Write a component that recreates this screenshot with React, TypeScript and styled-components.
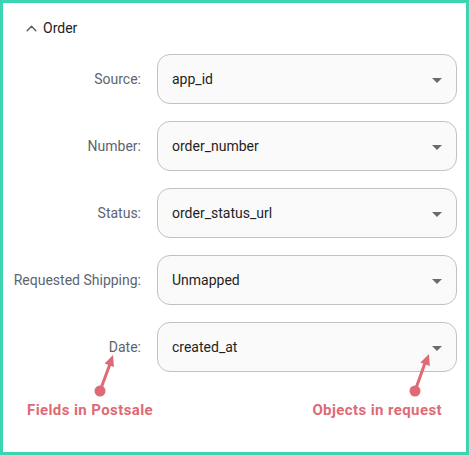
import styled, { createGlobalStyle } from 'styled-components'

const GlobalStyle = createGlobalStyle`
  html, body {
    margin: 0;
    padding: 0;
    background: #ffffff;
  }

  body {
    font-family: Roboto, 'Liberation Sans', Arial, sans-serif;
  }
`

const Frame = styled.div`
  position: relative;
  box-sizing: border-box;
  width: 469px;
  height: 455px;
  border: 3px solid #3dd5b1;
  background: #ffffff;
  padding-top: 15px;
`

const Header = styled.div`
  display: flex;
  align-items: center;
  gap: 5px;
  padding-left: 22px;
  height: 20px;
  font-size: 14px;
  color: #222222;
`

const Chevron = styled.svg`
  width: 13px;
  height: 13px;
  color: #5a5a5a;
`

const Rows = styled.div`
  display: grid;
  grid-template-columns: 138px 300px;
  column-gap: 16px;
  row-gap: 17px;
  margin-top: 16px;
`

const Label = styled.div`
  display: flex;
  align-items: center;
  justify-content: flex-end;
  font-size: 14px;
  color: #5b6570;
`

const Select = styled.div`
  box-sizing: border-box;
  height: 50px;
  display: flex;
  align-items: center;
  justify-content: space-between;
  padding: 0 14px 0 14px;
  border: 1px solid #c2c2c2;
  border-radius: 13px;
  background: #fafafa;
  font-size: 14px;
  color: #1f1f1f;
`

const Caret = styled.span`
  width: 0;
  height: 0;
  border-left: 5px solid transparent;
  border-right: 5px solid transparent;
  border-top: 5px solid #6b6b6b;
  margin-top: 3px;
`

const Notes = styled.div`
  display: flex;
  justify-content: space-between;
  margin-top: 29px;
  padding: 0 24px 0 24px;
`

const Note = styled.span`
  font-size: 15px;
  font-weight: 700;
  line-height: 18px;
  color: #de6a75;
  letter-spacing: 0.4px;
`

const Arrows = styled.svg`
  position: absolute;
  top: -3px;
  left: -3px;
  width: 469px;
  height: 455px;
  pointer-events: none;
`

const fields = [
  { label: 'Source:', value: 'app_id' },
  { label: 'Number:', value: 'order_number' },
  { label: 'Status:', value: 'order_status_url' },
  { label: 'Requested Shipping:', value: 'Unmapped' },
  { label: 'Date:', value: 'created_at' },
]

const App = () => {
  return (
    <>
      <GlobalStyle />
      <Frame>
        <Header>
          <Chevron viewBox='0 0 24 24' fill='none' stroke='currentColor' strokeWidth='2.6' strokeLinecap='round' strokeLinejoin='round'>
            <path d='M4 16l8-8 8 8' />
          </Chevron>
          Order
        </Header>
        <Rows>
          {fields.map((f) => (
            <>
              <Label key={f.label + '-l'}>{f.label}</Label>
              <Select key={f.label + '-s'}>
                {f.value}
                <Caret />
              </Select>
            </>
          ))}
        </Rows>
        <Notes>
          <Note>Fields in Postsale</Note>
          <Note>Objects in request</Note>
        </Notes>
        <Arrows viewBox='0 0 469 455'>
          <g fill='#de6a75' stroke='#de6a75'>
            <line x1='100' y1='391' x2='110' y2='364' strokeWidth='3' strokeLinecap='round' />
            <polygon points='113,355 114,367 104.6,363.6' stroke='none' />
            <circle cx='100' cy='391' r='5.5' stroke='none' />
            <line x1='415' y1='391' x2='425' y2='363' strokeWidth='3' strokeLinecap='round' />
            <polygon points='429,354 429.8,366.1 420.4,362.5' stroke='none' />
            <circle cx='415' cy='391' r='5.5' stroke='none' />
          </g>
        </Arrows>
      </Frame>
    </>
  )
}

export default App
